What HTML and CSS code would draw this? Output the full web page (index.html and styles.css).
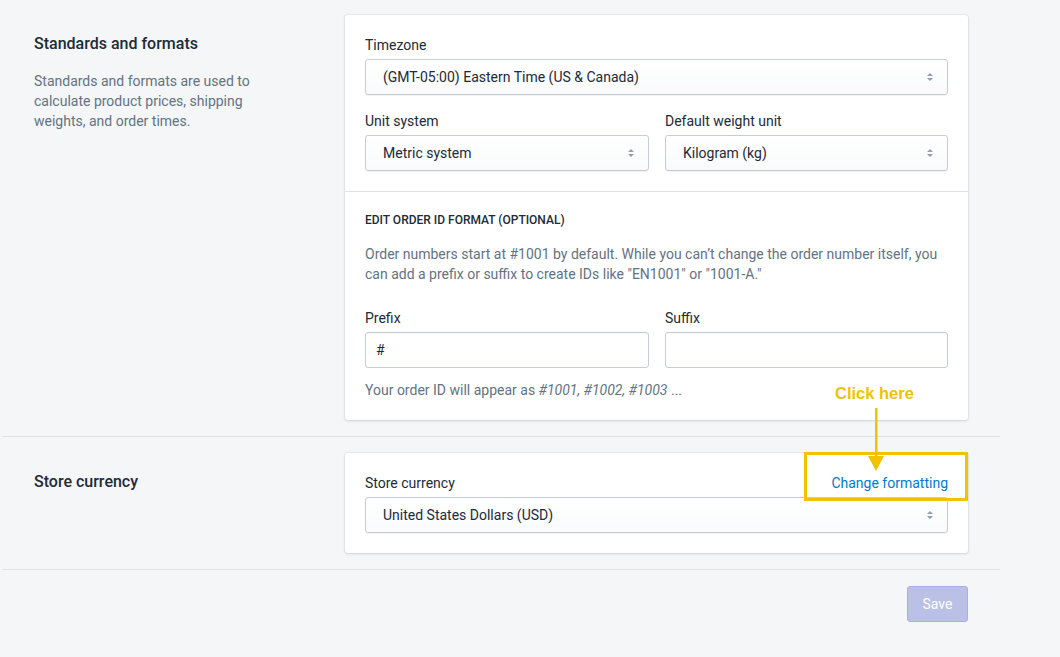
FILE: index.html
```html
<!DOCTYPE html>
<html>
<head>
<meta charset="utf-8">
<link rel="stylesheet" href="styles.css">
</head>
<body>
<div class="page">
  <section class="annotated">
    <div class="annotation">
      <h2>Standards and formats</h2>
      <p>Standards and formats are used to calculate product prices, shipping weights, and order times.</p>
    </div>
    <div class="card">
      <div class="card-section">
        <div class="field">
          <label>Timezone</label>
          <div class="select"><span>(GMT-05:00) Eastern Time (US &amp; Canada)</span>
            <svg class="arrows" viewBox="0 0 8 12" width="8" height="12"><path d="M1 5 L4 2 L7 5 Z M1 7 L4 10 L7 7 Z" fill="#919eab"/></svg>
          </div>
        </div>
        <div class="row">
          <div class="field">
            <label>Unit system</label>
            <div class="select"><span>Metric system</span>
              <svg class="arrows" viewBox="0 0 8 12" width="8" height="12"><path d="M1 5 L4 2 L7 5 Z M1 7 L4 10 L7 7 Z" fill="#919eab"/></svg>
            </div>
          </div>
          <div class="field">
            <label>Default weight unit</label>
            <div class="select"><span>Kilogram (kg)</span>
              <svg class="arrows" viewBox="0 0 8 12" width="8" height="12"><path d="M1 5 L4 2 L7 5 Z M1 7 L4 10 L7 7 Z" fill="#919eab"/></svg>
            </div>
          </div>
        </div>
      </div>
      <div class="card-section bordered">
        <h3>Edit order ID format (optional)</h3>
        <p class="subdued">Order numbers start at #1001 by default. While you can’t change the order number itself, you can add a prefix or suffix to create IDs like "EN1001" or "1001-A."</p>
        <div class="row">
          <div class="field">
            <label>Prefix</label>
            <div class="input">#</div>
          </div>
          <div class="field">
            <label>Suffix</label>
            <div class="input"></div>
          </div>
        </div>
        <p class="help">Your order ID will appear as <em>#1001, #1002, #1003</em> ...</p>
      </div>
    </div>
  </section>

  <section class="annotated">
    <div class="annotation">
      <h2>Store currency</h2>
    </div>
    <div class="card">
      <div class="card-section">
        <div class="field">
          <div class="label-row">
            <label>Store currency</label>
            <a class="link">Change formatting</a>
          </div>
          <div class="select"><span>United States Dollars (USD)</span>
            <svg class="arrows" viewBox="0 0 8 12" width="8" height="12"><path d="M1 5 L4 2 L7 5 Z M1 7 L4 10 L7 7 Z" fill="#919eab"/></svg>
          </div>
        </div>
      </div>
    </div>
  </section>

  <div class="actions">
    <button class="save" disabled>Save</button>
  </div>
</div>

<div class="callout-text">Click here</div>
<svg class="callout-arrow" width="20" height="66" viewBox="0 0 20 66">
  <rect x="9" y="0" width="2.5" height="50" fill="#f2c200"/>
  <path d="M2 48 L18 48 L10 63 Z" fill="#f2c200"/>
</svg>
<div class="callout-box"></div>
</body>
</html>
```
FILE: styles.css
```css
* { box-sizing: border-box; }
html, body { margin: 0; padding: 0; }
body {
  background: #f4f6f8;
  font-family: "Segoe UI", Roboto, "Noto Sans", sans-serif;
  font-size: 14px;
  line-height: 20px;
  color: #212b36;
  position: relative;
  width: 1060px;
  height: 657px;
  overflow: hidden;
}
.page {
  margin-left: 2px;
  width: 998px;
}
.annotated {
  display: grid;
  grid-template-columns: 343px 623px;
  padding: 16px 32px 16px 0;
  border-bottom: 1px solid #dfe3e8;
}
.annotated:first-child { padding-top: 15px; }
.annotation { padding-left: 32px; }
.annotation h2 {
  margin: 17px 0 0;
  font-size: 16px;
  line-height: 24px;
  font-weight: 500;
}
.annotation p {
  margin: 15px 0 0;
  color: #637381;
  max-width: 240px;
}
.card {
  background: #fff;
  border-radius: 3px;
  box-shadow: 0 0 0 1px rgba(63,63,68,.05), 0 1px 3px 0 rgba(63,63,68,.15);
}
.card-section { padding: 20px; }
.card-section.bordered { border-top: 1px solid #dfe3e8; }
.field label { display: block; height: 20px; }
.field + .row { margin-top: 16px; }
.row {
  display: grid;
  grid-template-columns: 284px 283px;
  column-gap: 16px;
}
.select {
  margin-top: 4px;
  height: 36px;
  border: 1px solid #c4cdd5;
  border-radius: 3px;
  background: linear-gradient(#fff, #f9fafb);
  box-shadow: 0 1px 0 0 rgba(22,29,37,.05);
  display: flex;
  align-items: center;
  justify-content: space-between;
  padding: 0 13px 0 17px;
}
.arrows { display: block; }
.input {
  margin-top: 4px;
  height: 36px;
  border: 1px solid #c4cdd5;
  border-radius: 3px;
  background: #fff;
  box-shadow: inset 0 1px 0 0 rgba(99,115,129,.05);
  padding: 7px 10px;
}
h3 {
  margin: 0;
  font-size: 12px;
  line-height: 16px;
  font-weight: 500;
  text-transform: uppercase;
}
.subdued {
  margin: 16px 0 24px;
  color: #637381;
}
.help {
  margin: 12px 0 0;
  color: #637381;
}
.label-row {
  display: flex;
  justify-content: space-between;
}
.link { color: #007ace; text-decoration: none; }
.actions {
  display: flex;
  justify-content: flex-end;
  padding: 16px 32px 0 0;
}
.save {
  width: 61px;
  height: 36px;
  border: 1px solid #a9afe0;
  border-radius: 3px;
  background: #bac0e6;
  color: #fff;
  font-family: inherit;
  font-size: 14px;
  padding: 0;
}
.callout-text {
  position: absolute;
  left: 835px;
  top: 383px;
  font-family: "Liberation Sans", Arial, sans-serif;
  font-weight: 700;
  font-size: 16.5px;
  line-height: 20px;
  color: #f2c200;
}
.callout-arrow {
  position: absolute;
  left: 866px;
  top: 408px;
}
.callout-box {
  position: absolute;
  left: 804px;
  top: 452px;
  width: 164px;
  height: 49px;
  border: 3px solid #f2c200;
}
```
